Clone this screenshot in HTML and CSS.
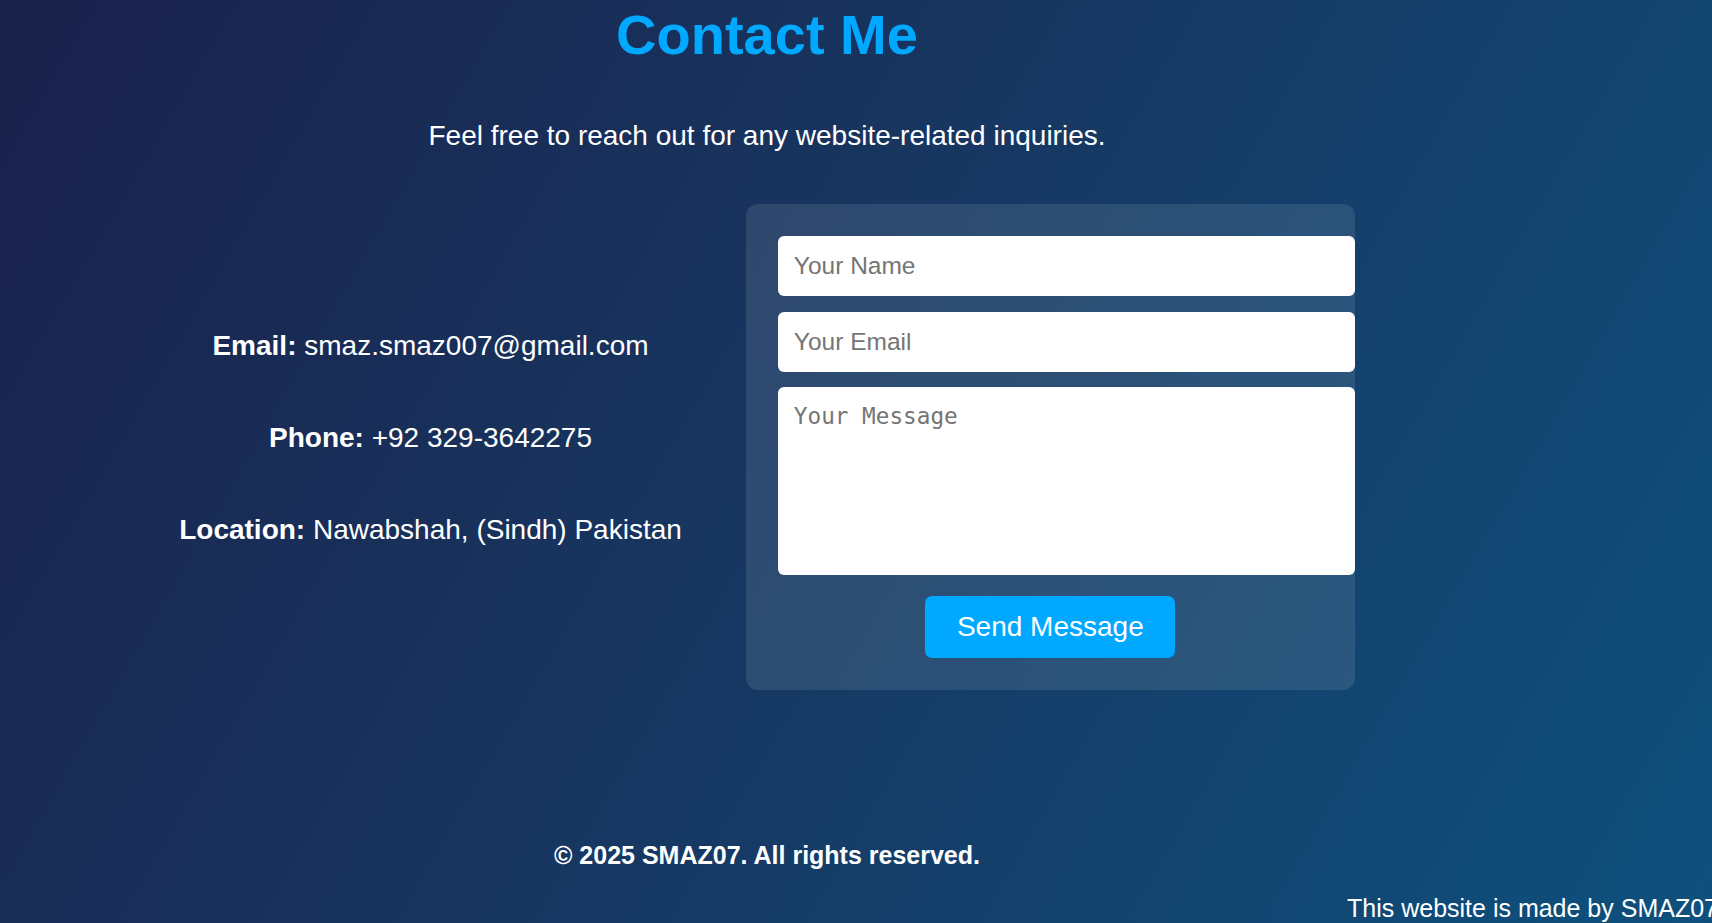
FILE: index.html
```html
<!DOCTYPE html>
<html lang="en">
<head>
<meta charset="utf-8">
<title>Contact Me</title>
<link rel="stylesheet" href="styles.css">
</head>
<body>
<div class="site">
  <main class="page">
    <h1 class="title">Contact Me</h1>
    <p class="subtitle">Feel free to reach out for any website-related inquiries.</p>
    <section class="row">
      <div class="info">
        <p><strong>Email:</strong> smaz.smaz007@gmail.com</p>
        <p><strong>Phone:</strong> +92 329-3642275</p>
        <p><strong>Location:</strong> Nawabshah, (Sindh) Pakistan</p>
      </div>
      <form class="card">
        <input class="field field-name" type="text" placeholder="Your Name">
        <input class="field field-email" type="email" placeholder="Your Email">
        <textarea class="field message" placeholder="Your Message"></textarea>
        <button class="send" type="button">Send Message</button>
      </form>
    </section>
    <p class="copy">© 2025 SMAZ07. All rights reserved.</p>
  </main>
  <div class="ticker"><span class="ticker-text">This website is made by SMAZ07</span></div>
</div>
</body>
</html>
```

FILE: styles.css
```css
html, body {
  margin: 0;
  padding: 0;
}

body {
  font-family: "Liberation Sans", Arial, sans-serif;
  color: #ffffff;
  overflow: hidden;
}

.site {
  min-height: 100vh;
  background: linear-gradient(120deg, #1a214b 0%, #173660 45%, #0e507d 100%);
  overflow: hidden;
}

.page {
  width: 1534px;
  text-align: center;
}

.title {
  margin: 0;
  padding-top: 2px;
  font-size: 56px;
  font-weight: bold;
  line-height: normal;
  color: #00a8ff;
}

.subtitle {
  margin: 53px 0 0;
  font-size: 28px;
  line-height: normal;
}

.row {
  margin-top: 52px;
  display: flex;
  justify-content: center;
  align-items: center;
  gap: 64px;
}

.info {
  display: flex;
  flex-direction: column;
  gap: 60px;
  margin-bottom: 18px;
  font-size: 28px;
  line-height: normal;
  white-space: nowrap;
}

.info p {
  margin: 0;
}

.card {
  box-sizing: border-box;
  width: 609px;
  padding: 32px;
  border-radius: 12px;
  background: rgba(255, 255, 255, 0.1);
  display: flex;
  flex-direction: column;
  align-items: stretch;
}

.field {
  display: block;
  width: 100%;
  box-sizing: content-box;
  padding: 16px;
  border: none;
  border-radius: 6px;
  background: #ffffff;
  color: #222;
  font-family: "Liberation Sans", Arial, sans-serif;
  font-size: 24.5px;
  line-height: normal;
  margin: 0;
  outline: none;
}

.field::placeholder {
  color: #757575;
}

.field-email {
  margin-top: 16px;
}

.message {
  margin-top: 15px;
  height: 156px;
  resize: none;
  font-family: "DejaVu Sans Mono", "Liberation Mono", monospace;
  font-size: 22.7px;
}

.send {
  align-self: center;
  margin-top: 21px;
  padding: 15px 31.5px;
  border: none;
  border-radius: 7px;
  background: #00a8ff;
  color: #ffffff;
  font-family: "Liberation Sans", Arial, sans-serif;
  font-size: 28px;
  line-height: normal;
  cursor: pointer;
}

.copy {
  margin: 151px 0 0;
  font-size: 25px;
  font-weight: bold;
  line-height: normal;
}

.ticker {
  margin-top: 24px;
  white-space: nowrap;
  overflow: hidden;
  font-size: 25px;
  line-height: normal;
}

.ticker-text {
  display: inline-block;
  margin-left: 1347px;
}
```
